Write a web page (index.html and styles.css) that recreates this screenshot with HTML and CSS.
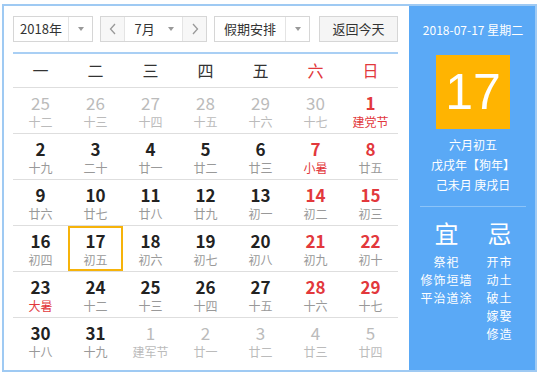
FILE: index.html
```html
<!DOCTYPE html>
<html>
<head>
    <meta charset="UTF-8">
    <title>万年历</title>
    <link rel="stylesheet" href="styles.css">
</head>
<body>
    <div class="calendar">
        <div class="main">
            <div class="toolbar">
                <div class="select year">
                    <span class="val">2018年</span>
                    <span class="arrow"></span>
                </div>
                <div class="month-box">
                    <span class="nav"><svg width="8" height="12" viewBox="0 0 8 12"><path d="M6 1L1.5 6L6 11" fill="none" stroke="#999" stroke-width="1.3"/></svg></span>
                    <span class="month"><span class="val">7月</span><span class="arrow"></span></span>
                    <span class="nav"><svg width="8" height="12" viewBox="0 0 8 12"><path d="M2 1L6.5 6L2 11" fill="none" stroke="#999" stroke-width="1.3"/></svg></span>
                </div>
                <div class="select holiday">
                    <span class="val">假期安排</span>
                    <span class="arrow"></span>
                </div>
                <span class="today-btn">返回今天</span>
            </div>

            <div class="week">
                <span>一</span><span>二</span><span>三</span><span>四</span><span>五</span>
                <span class="red">六</span><span class="red">日</span>
            </div>

            <div class="days">
                <div class="day other"><b>25</b><i>十二</i></div>
                <div class="day other"><b>26</b><i>十三</i></div>
                <div class="day other"><b>27</b><i>十四</i></div>
                <div class="day other"><b>28</b><i>十五</i></div>
                <div class="day other"><b>29</b><i>十六</i></div>
                <div class="day other"><b>30</b><i>十七</i></div>
                <div class="day red"><b>1</b><i class="fest">建党节</i></div>

                <div class="day"><b>2</b><i>十九</i></div>
                <div class="day"><b>3</b><i>二十</i></div>
                <div class="day"><b>4</b><i>廿一</i></div>
                <div class="day"><b>5</b><i>廿二</i></div>
                <div class="day"><b>6</b><i>廿三</i></div>
                <div class="day red"><b>7</b><i class="fest">小暑</i></div>
                <div class="day red"><b>8</b><i>廿五</i></div>

                <div class="day"><b>9</b><i>廿六</i></div>
                <div class="day"><b>10</b><i>廿七</i></div>
                <div class="day"><b>11</b><i>廿八</i></div>
                <div class="day"><b>12</b><i>廿九</i></div>
                <div class="day"><b>13</b><i>初一</i></div>
                <div class="day red"><b>14</b><i>初二</i></div>
                <div class="day red"><b>15</b><i>初三</i></div>

                <div class="day"><b>16</b><i>初四</i></div>
                <div class="day current"><b>17</b><i>初五</i></div>
                <div class="day"><b>18</b><i>初六</i></div>
                <div class="day"><b>19</b><i>初七</i></div>
                <div class="day"><b>20</b><i>初八</i></div>
                <div class="day red"><b>21</b><i>初九</i></div>
                <div class="day red"><b>22</b><i>初十</i></div>

                <div class="day"><b>23</b><i class="fest">大暑</i></div>
                <div class="day"><b>24</b><i>十二</i></div>
                <div class="day"><b>25</b><i>十三</i></div>
                <div class="day"><b>26</b><i>十四</i></div>
                <div class="day"><b>27</b><i>十五</i></div>
                <div class="day red"><b>28</b><i>十六</i></div>
                <div class="day red"><b>29</b><i>十七</i></div>

                <div class="day"><b>30</b><i>十八</i></div>
                <div class="day"><b>31</b><i>十九</i></div>
                <div class="day other"><b>1</b><i>建军节</i></div>
                <div class="day other"><b>2</b><i>廿一</i></div>
                <div class="day other"><b>3</b><i>廿二</i></div>
                <div class="day other"><b>4</b><i>廿三</i></div>
                <div class="day other"><b>5</b><i>廿四</i></div>
            </div>
        </div>

        <div class="side">
            <p class="side-date">2018-07-17 星期二</p>
            <div class="side-num">17</div>
            <div class="side-lunar">
                <p>六月初五</p>
                <p>戊戌年【狗年】</p>
                <p>己未月 庚戌日</p>
            </div>
            <div class="yiji">
                <div>
                    <h3>宜</h3>
                    <ul>
                        <li>祭祀</li>
                        <li>修饰垣墙</li>
                        <li>平治道涂</li>
                    </ul>
                </div>
                <div>
                    <h3>忌</h3>
                    <ul>
                        <li>开市</li>
                        <li>动土</li>
                        <li>破土</li>
                        <li>嫁娶</li>
                        <li>修造</li>
                    </ul>
                </div>
            </div>
        </div>
    </div>
</body>
</html>
```
FILE: styles.css
```css
* {
    margin: 0;
    padding: 0;
    box-sizing: border-box;
}
body {
    font-family: "Noto Sans CJK SC", "Liberation Sans", sans-serif;
    color: #333;
    background: #fff;
}
.calendar {
    display: flex;
    width: 535px;
    height: 368px;
    margin: 4px 0 0 2px;
    border: 2px solid #9fcaf3;
}
.main {
    width: 405px;
    padding: 10px 11px 0 9px;
}
/* 工具栏 */
.toolbar {
    display: flex;
    height: 26px;
    font-size: 13px;
    line-height: 24px;
}
.select,
.month-box {
    display: flex;
    border: 1px solid #d6d6d6;
    background: #fff;
}
.select .val {
    width: 54px;
    text-align: center;
}
.holiday {
    margin-left: 7px;
}
.holiday .val {
    width: 70px;
}
.arrow {
    width: 24px;
    border-left: 1px solid #e4e4e4;
    display: flex;
    align-items: center;
    justify-content: center;
}
.arrow::after {
    content: "";
    border-left: 3px solid transparent;
    border-right: 3px solid transparent;
    border-top: 4px solid #999;
}
.month-box {
    margin-left: 7px;
}
.month-box .nav {
    width: 23px;
    display: flex;
    align-items: center;
    justify-content: center;
    background: #f7f7f7;
}
.month {
    display: flex;
    width: 59px;
    border-left: 1px solid #e4e4e4;
    border-right: 1px solid #e4e4e4;
}
.month .val {
    width: 36px;
    text-align: center;
    padding-left: 4px;
}
.month .arrow {
    border-left: none;
    width: 22px;
}
.today-btn {
    margin-left: 9px;
    width: 82px;
    text-align: center;
    border: 1px solid #d6d6d6;
    background: #f5f5f5;
}
/* 星期 */
.week {
    display: grid;
    grid-template-columns: repeat(7, 55px);
    margin-top: 10px;
    height: 36px;
    border-top: 2px solid #a9cff4;
    border-bottom: 1px solid #dedede;
    font-size: 16px;
    line-height: 33px;
    text-align: center;
}
.red {
    color: #e2383c;
}
/* 日期 */
.days {
    display: grid;
    grid-template-columns: repeat(7, 55px);
}
.day {
    height: 46px;
    padding-top: 4px;
    border-bottom: 1px solid #dedede;
    text-align: center;
}
.day:nth-last-child(-n+7) {
    border-bottom: none;
}
.day b {
    display: block;
    font-size: 17px;
    line-height: 22px;
    font-weight: bold;
    color: #222;
}
.day i {
    display: block;
    font-style: normal;
    font-size: 12px;
    line-height: 16px;
    color: #999;
}
.day.red b,
.day i.fest {
    color: #e2383c;
}
.day.other b,
.day.other i {
    color: #bbb;
    font-weight: normal;
}
.day.current {
    box-shadow: inset 0 0 0 2px #f6b30a;
}
/* 右侧 */
.side {
    flex: 1;
    background: #5aa9f6;
    color: #fff;
    text-align: center;
    padding: 15px 9px 0 11px;
}
.side-date {
    font-size: 12px;
    line-height: 18px;
}
.side-num {
    width: 74px;
    height: 74px;
    margin: 16px auto 0;
    background: #ffb401;
    font-family: "Liberation Sans", sans-serif;
    font-size: 50px;
    line-height: 74px;
}
.side-lunar {
    margin-top: 6px;
    font-size: 12px;
    line-height: 20px;
    padding-bottom: 11px;
    border-bottom: 1px solid #8cc4f9;
}
.yiji {
    display: grid;
    grid-template-columns: 1fr 1fr;
    margin-top: 11px;
}
.yiji h3 {
    font-size: 24px;
    line-height: 30px;
    font-weight: normal;
}
.yiji ul {
    list-style: none;
    margin-top: 5px;
    font-size: 12px;
    line-height: 18px;
    letter-spacing: 1px;
}
```
